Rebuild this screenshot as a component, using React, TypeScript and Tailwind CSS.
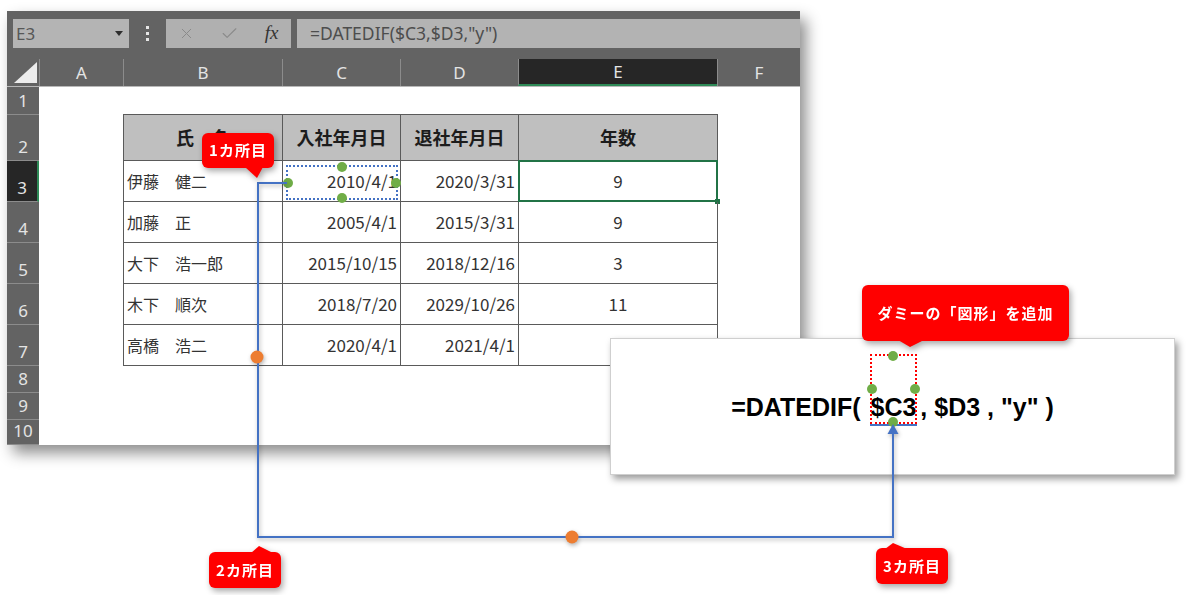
import { Check, X } from 'lucide-react';

// Excel screenshot with DATEDIF callouts and connector

const COLS = [
    { label: 'A', w: 'w-[84px]' },
    { label: 'B', w: 'w-[159px]' },
    { label: 'C', w: 'w-[118px]' },
    { label: 'D', w: 'w-[118px]' },
    { label: 'E', w: 'w-[199px]', active: true },
    { label: 'F', w: 'w-[83px]' },
];

const ROWS = [
    { n: 1, h: 'h-[28px]' },
    { n: 2, h: 'h-[46px]' },
    { n: 3, h: 'h-[41px]', active: true },
    { n: 4, h: 'h-[41px]' },
    { n: 5, h: 'h-[41px]' },
    { n: 6, h: 'h-[41px]' },
    { n: 7, h: 'h-[41px]' },
    { n: 8, h: 'h-[27px]' },
    { n: 9, h: 'h-[27px]' },
    { n: 10, h: 'h-[25px]' },
];

const DATA = [
    { name: '伊藤　健二', start: '2010/4/1', end: '2020/3/31', years: '9' },
    { name: '加藤　正', start: '2005/4/1', end: '2015/3/31', years: '9' },
    { name: '大下　浩一郎', start: '2015/10/15', end: '2018/12/16', years: '3' },
    { name: '木下　順次', start: '2018/7/20', end: '2029/10/26', years: '11' },
    { name: '高橋　浩二', start: '2020/4/1', end: '2021/4/1', years: '1' },
];

const GreenDot = ({ className }: { className: string }) => (
    <span className={`absolute w-[10px] h-[10px] rounded-full bg-[#70ad47] -translate-x-1/2 -translate-y-1/2 ${className}`} />
);

const cell = 'border-r border-b border-[#5a5a5a] flex items-center';

function Toolbar() {
    return (
        <div className="h-[49px] pt-[8px] flex items-start font-['Noto_Sans',sans-serif]">
            <div className="ml-[6px] w-[116px] h-[29px] bg-[#b4b4b4] flex items-center justify-between pl-[3px] pr-[6px]">
                <span className="text-[17px] text-[#575757]">E3</span>
                <span className="w-0 h-0 border-l-[4px] border-r-[4px] border-t-[5px] border-l-transparent border-r-transparent border-t-[#2e2e2e]" />
            </div>
            <div className="ml-[17px] w-[3px] h-[29px] flex flex-col justify-center gap-[3px]">
                <span className="w-[3px] h-[3px] bg-[#e6e6e6]" />
                <span className="w-[3px] h-[3px] bg-[#e6e6e6]" />
                <span className="w-[3px] h-[3px] bg-[#e6e6e6]" />
            </div>
            <div className="ml-[17px] w-[125px] h-[29px] bg-[#b0b0b0] flex items-center">
                <span className="w-[40px] flex justify-center text-[#8a8a8a]"><X size={17} strokeWidth={1.4} /></span>
                <span className="w-[46px] flex justify-center text-[#8a8a8a]"><Check size={19} strokeWidth={1.4} /></span>
                <span className="w-[39px] flex justify-center font-['Liberation_Serif',serif] italic text-[19px] text-[#333]">fx</span>
            </div>
            <div className="ml-[6px] flex-1 h-[29px] bg-[#b3b3b3] flex items-center pl-[13px] text-[17.5px] text-[#4d4d4d]">
                =DATEDIF($C3,$D3,"y")
            </div>
        </div>
    );
}

function ColumnHeaders() {
    return (
        <div className="h-[27px] flex font-['Noto_Sans',sans-serif] text-[17px] text-[#e4e4e4]">
            <div className="w-[32px] relative">
                <svg className="absolute left-0 top-0" width="32" height="27" viewBox="0 0 32 27">
                    <polygon points="7,24 30,24 30,3" fill="#ececec" />
                </svg>
            </div>
            {COLS.map((c) => (
                <div
                    key={c.label}
                    className={`${c.w} flex items-center justify-center border-l border-[#8c8c8c] ${c.active ? 'bg-[#262626] border-b-2 border-b-[#2e8a57]' : ''}`}
                >
                    {c.label}
                </div>
            ))}
        </div>
    );
}

function Sheet() {
    return (
        <div className="flex flex-1 border-t border-[#b8b8b8]">
            <div className="w-[32px] flex flex-col font-['Noto_Sans',sans-serif] text-[17px] text-[#e4e4e4]">
                {ROWS.map((r) => (
                    <div
                        key={r.n}
                        className={`${r.h} shrink-0 flex items-end justify-center pb-[1px] border-b border-[#8c8c8c] ${r.active ? 'bg-[#262626] border-r-2 border-r-[#2e8a57]' : ''}`}
                    >
                        {r.n}
                    </div>
                ))}
            </div>
            <div className="flex-1 bg-white pl-[84px] pt-[27px]">
                <div className="grid grid-cols-[159px_118px_118px_199px] grid-rows-[46px_41px_41px_41px_41px_41px] w-[595px] border-l border-t border-[#5a5a5a] font-['Noto_Sans_CJK_JP',sans-serif] text-[16px] text-[#333]">
                    {['氏　名', '入社年月日', '退社年月日', '年数'].map((h) => (
                        <div key={h} className={`${cell} justify-center bg-[#bfbfbf] font-bold text-[18px] text-[#1c1c1c]`}>
                            {h}
                        </div>
                    ))}
                    {DATA.map((d, i) => (
                        <div key={d.name} className="contents">
                            <div className={`${cell} pl-[3px]`}>{d.name}</div>
                            <div className={`${cell} justify-end pr-[3px] text-[17px]`}>{d.start}</div>
                            <div className={`${cell} justify-end pr-[3px] text-[17px]`}>{d.end}</div>
                            <div className={`${cell} justify-center relative text-[17px]`}>
                                {d.years}
                                {i === 0 && (
                                    <>
                                        <span className="absolute -left-[1px] -top-[1px] -right-[1px] -bottom-[1px] border-2 border-[#217346]" />
                                        <span className="absolute -right-[3px] -bottom-[3px] w-[5px] h-[5px] bg-[#217346]" />
                                    </>
                                )}
                            </div>
                        </div>
                    ))}
                </div>
            </div>
        </div>
    );
}

function ExcelWindow() {
    return (
        <div className="w-[793px] h-[434px] bg-[#636363] flex flex-col overflow-hidden shadow-[6px_8px_14px_rgba(0,0,0,0.45)]">
            <Toolbar />
            <ColumnHeaders />
            <Sheet />
        </div>
    );
}

function FormulaCard() {
    return (
        <div className="absolute left-[610px] top-[338px] w-[565px] h-[137px] bg-white border border-[#cfcfcf] shadow-[3px_4px_7px_rgba(0,0,0,0.4)] flex items-center justify-center pt-[1px]">
            <div className="font-['Liberation_Sans',Arial,sans-serif] font-bold text-[25px] leading-none text-black whitespace-pre">
                {'=DATEDIF( '}
                <span className="relative left-[3px] inline-block">
                    $C3
                    <span className="absolute -left-[1px] -right-[1px] -bottom-[6px] h-[2px] bg-[#4472c4]" />
                    <span className="absolute -left-[1px] -right-[1px] -bottom-[4px] h-[70px] border-2 border-dotted border-[#ff0000]">
                        <GreenDot className="left-1/2 top-0" />
                        <GreenDot className="left-1/2 top-full" />
                        <GreenDot className="left-0 top-1/2" />
                        <GreenDot className="left-full top-1/2" />
                    </span>
                </span>
                {' , $D3 , "y" )'}
            </div>
        </div>
    );
}

function Connector() {
    return (
        <svg className="absolute left-0 top-0 drop-shadow-[1px_2px_2px_rgba(0,0,0,0.3)]" width="1200" height="595" viewBox="0 0 1200 595">
            <path d="M287 183 H258 V537 H893 V432" fill="none" stroke="#4472c4" strokeWidth="2" />
            <polygon points="893,424 887.5,434 898.5,434" fill="#4472c4" />
            <circle cx="257" cy="357" r="6.5" fill="#ed7d31" />
            <circle cx="572" cy="537" r="6.5" fill="#ed7d31" />
        </svg>
    );
}

function Callout({ text, className, tail }: { text: string; className: string; tail: React.ReactNode }) {
    return (
        <div className={`absolute drop-shadow-[2px_3px_3px_rgba(0,0,0,0.35)] ${className}`}>
            <div className="w-full h-full rounded-[6px] bg-[#ff0000] flex items-center justify-center text-white font-bold text-[15px] tracking-[1px] font-['Noto_Sans_CJK_JP',sans-serif]">
                {text}
            </div>
            {tail}
        </div>
    );
}

export default function App() {
    return (
        <div className="relative w-[1200px] h-[595px] overflow-hidden bg-white">
            <div className="pl-[7px] pt-[11px]">
                <ExcelWindow />
            </div>

            {/* copied range marker on C3 */}
            <div className="absolute left-[286px] top-[165px] w-[112px] h-[35px] border-2 border-dotted border-[#4472c4]">
                <GreenDot className="left-1/2 top-0" />
                <GreenDot className="left-1/2 top-full" />
                <GreenDot className="left-0 top-1/2" />
                <GreenDot className="left-full top-1/2" />
            </div>

            <FormulaCard />
            <Connector />

            <Callout
                text="1カ所目"
                className="left-[202px] top-[133px] w-[72px] h-[35px]"
                tail={
                    <svg className="absolute left-[43px] top-[34px]" width="18" height="11" viewBox="0 0 18 11">
                        <polygon points="0,0 18,0 12,11" fill="#ff0000" />
                    </svg>
                }
            />
            <Callout
                text="ダミーの「図形」を追加"
                className="left-[862px] top-[285px] w-[207px] h-[56px]"
                tail={
                    <svg className="absolute left-[36px] top-[55px]" width="26" height="7" viewBox="0 0 26 7">
                        <polygon points="0,0 26,0 12,7" fill="#ff0000" />
                    </svg>
                }
            />
            <Callout
                text="2カ所目"
                className="left-[209px] top-[552px] w-[72px] h-[36px]"
                tail={
                    <svg className="absolute left-[42px] -top-[6px]" width="22" height="7" viewBox="0 0 22 7">
                        <polygon points="0,7 8,0 22,7" fill="#ff0000" />
                    </svg>
                }
            />
            <Callout
                text="3カ所目"
                className="left-[876px] top-[548px] w-[72px] h-[36px]"
                tail={
                    <svg className="absolute left-[9px] -top-[5px]" width="22" height="6" viewBox="0 0 22 6">
                        <polygon points="0,6 8,0 22,6" fill="#ff0000" />
                    </svg>
                }
            />
        </div>
    );
}
